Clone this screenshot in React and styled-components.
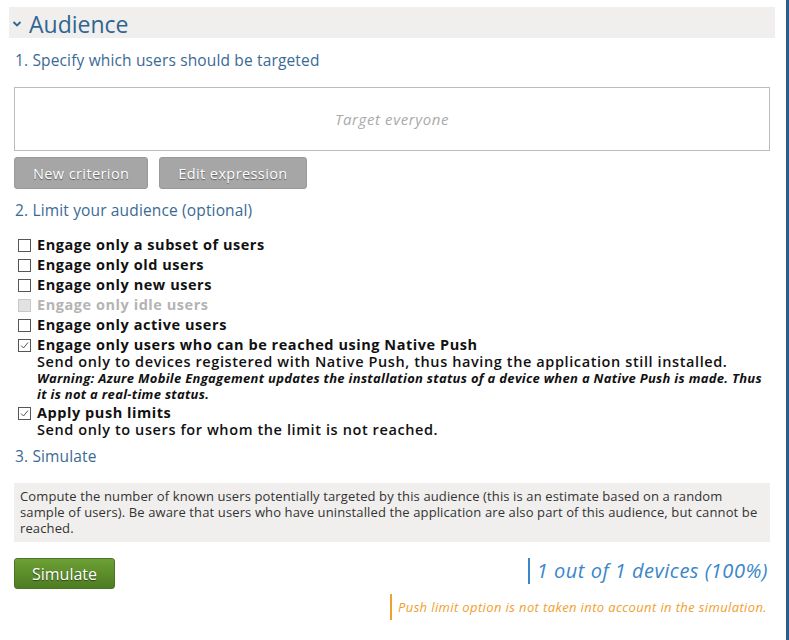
import styled, { createGlobalStyle } from "styled-components";

const GlobalStyle = createGlobalStyle`
  html, body {
    margin: 0;
    padding: 0;
    background: #fff;
  }
  body {
    font-family: "Open Sans", "Noto Sans", sans-serif;
  }
`;

const Frame = styled.div`
  width: 786px;
  min-height: 640px;
  border-right: 3px solid #2e5c86;
`;

const Panel = styled.div`
  width: 766px;
  margin-left: 9px;
  padding-top: 7px;
`;

const Header = styled.div`
  display: flex;
  align-items: center;
  gap: 7px;
  height: 31px;
  box-sizing: border-box;
  padding: 3px 0 0 3px;
  background: #f0efee;
  color: #2f6590;
`;

const HeaderTitle = styled.h2`
  margin: 0;
  font-size: 23px;
  font-weight: 400;
  line-height: 28px;
`;

const Body = styled.div`
  padding: 0 5px;
`;

const StepTitle = styled.h3`
  margin: 0;
  font-size: 15.5px;
  font-weight: 400;
  letter-spacing: 0.15px;
  color: #3a6a94;
  line-height: 22px;
  padding: ${(p) => p.$pad || "11px 1px 0"};
`;

const TargetBox = styled.div`
  margin-top: 16px;
  height: 62px;
  border: 1px solid #bcbcbc;
  display: flex;
  align-items: center;
  justify-content: center;
  color: #aaa;
  font-style: italic;
  font-size: 15px;
  letter-spacing: 0.6px;
`;

const ButtonRow = styled.div`
  display: flex;
  gap: 11px;
  margin-top: 6px;
`;

const GrayButton = styled.button`
  height: 32px;
  padding: 0 18px;
  background: #a6a6a6;
  border: 1px solid #999;
  border-radius: 3px;
  color: #fff;
  font-family: inherit;
  font-size: 14.5px;
  letter-spacing: 0.4px;
  text-shadow: 0 1px 1px rgba(0, 0, 0, 0.45);
  cursor: pointer;
`;

const OptionList = styled.div`
  margin-top: 14px;
  padding-left: 4px;
  display: flex;
  flex-direction: column;
`;

const Option = styled.label`
  display: grid;
  grid-template-columns: 13px 1fr;
  column-gap: 6px;
  color: ${(p) => (p.$disabled ? "#b4b4b4" : "#111")};
  font-size: 14.5px;
`;

const Box = styled.span`
  width: 11px;
  height: 11px;
  margin-top: 4px;
  border: 1px solid ${(p) => (p.$disabled ? "#c8c8c8" : "#555")};
  background: ${(p) => (p.$disabled ? "#e2e2e2" : "#fff")};
  display: flex;
  align-items: center;
  justify-content: center;
`;

const OptionText = styled.div`
  display: flex;
  flex-direction: column;
  padding: 1px 0;
`;

const OptionLabel = styled.span`
  font-weight: 700;
  letter-spacing: 0.55px;
  line-height: 18px;
`;

const OptionDesc = styled.span`
  font-weight: 600;
  letter-spacing: 0.6px;
  line-height: 16px;
`;

const Warning = styled.span`
  font-style: italic;
  font-weight: 700;
  font-size: 13px;
  letter-spacing: 0.3px;
  line-height: 16px;
`;

const Info = styled.div`
  margin-top: 16px;
  background: #f0efee;
  padding: 5px 4px 6px 6px;
  font-size: 13px;
  letter-spacing: 0.12px;
  line-height: 16px;
  white-space: nowrap;
  color: #333;
`;

const SimRow = styled.div`
  display: flex;
  justify-content: space-between;
  align-items: flex-start;
  margin-top: 16px;
`;

const GreenButton = styled.button`
  height: 31px;
  width: 101px;
  border: 1px solid #4a7426;
  border-radius: 3px;
  background: linear-gradient(#6da035, #4d7c22);
  color: #fff;
  font-family: inherit;
  font-size: 16px;
  text-shadow: 0 1px 1px rgba(0, 0, 0, 0.5);
  cursor: pointer;
`;

const Result = styled.div`
  margin-right: 2px;
  border-left: 2px solid #3a86c8;
  padding-left: 7px;
  color: #3a86c8;
  font-style: italic;
  font-size: 20px;
  letter-spacing: 0.5px;
  line-height: 26px;
`;

const NoteRow = styled.div`
  display: flex;
  justify-content: flex-end;
  margin-top: 5px;
`;

const Note = styled.div`
  border-left: 2px solid #f0a030;
  padding-left: 6px;
  margin-right: 3px;
  color: #f0a030;
  font-style: italic;
  font-size: 13px;
  letter-spacing: 0.38px;
  line-height: 26px;
`;

function Check({ checked, disabled }) {
  return (
    <Box $disabled={disabled}>
      {checked && (
        <svg width="9" height="9" viewBox="0 0 9 9">
          <path d="M1 4.5 L3.5 7 L8 1.5" fill="none" stroke="#555" strokeWidth="1" />
        </svg>
      )}
    </Box>
  );
}

const simpleOptions = [
  { label: "Engage only a subset of users" },
  { label: "Engage only old users" },
  { label: "Engage only new users" },
  { label: "Engage only idle users", disabled: true },
  { label: "Engage only active users" },
];

export default function App() {
  return (
    <Frame>
      <GlobalStyle />
      <Panel>
        <Header>
          <svg width="10" height="8" viewBox="0 0 10 8">
            <path d="M1.5 2 L5 5.5 L8.5 2" fill="none" stroke="#2f6590" strokeWidth="1.8" />
          </svg>
          <HeaderTitle>Audience</HeaderTitle>
        </Header>
        <Body>
          <StepTitle $pad="11px 1px 0">1. Specify which users should be targeted</StepTitle>
          <TargetBox>Target everyone</TargetBox>
          <ButtonRow>
            <GrayButton>New criterion</GrayButton>
            <GrayButton>Edit expression</GrayButton>
          </ButtonRow>

          <StepTitle $pad="10px 1px 0">2. Limit your audience (optional)</StepTitle>
          <OptionList>
            {simpleOptions.map((o) => (
              <Option key={o.label} $disabled={o.disabled}>
                <Check disabled={o.disabled} />
                <OptionText>
                  <OptionLabel>{o.label}</OptionLabel>
                </OptionText>
              </Option>
            ))}
            <Option>
              <Check checked />
              <OptionText>
                <OptionLabel>Engage only users who can be reached using Native Push</OptionLabel>
                <OptionDesc>
                  Send only to devices registered with Native Push, thus having the application still installed.
                </OptionDesc>
                <Warning>
                  Warning: Azure Mobile Engagement updates the installation status of a device when a Native
                  Push is made. Thus it is not a real-time status.
                </Warning>
              </OptionText>
            </Option>
            <Option>
              <Check checked />
              <OptionText>
                <OptionLabel>Apply push limits</OptionLabel>
                <OptionDesc>Send only to users for whom the limit is not reached.</OptionDesc>
              </OptionText>
            </Option>
          </OptionList>

          <StepTitle $pad="6px 1px 0">3. Simulate</StepTitle>
          <Info>
            Compute the number of known users potentially targeted by this audience (this is an estimate
            based on a random
            <br />
            sample of users). Be aware that users who have uninstalled the application are also part of this
            audience, but cannot be
            <br />
            reached.
          </Info>
          <SimRow>
            <GreenButton>Simulate</GreenButton>
            <Result>1 out of 1 devices (100%)</Result>
          </SimRow>
          <NoteRow>
            <Note>Push limit option is not taken into account in the simulation.</Note>
          </NoteRow>
        </Body>
      </Panel>
    </Frame>
  );
}
